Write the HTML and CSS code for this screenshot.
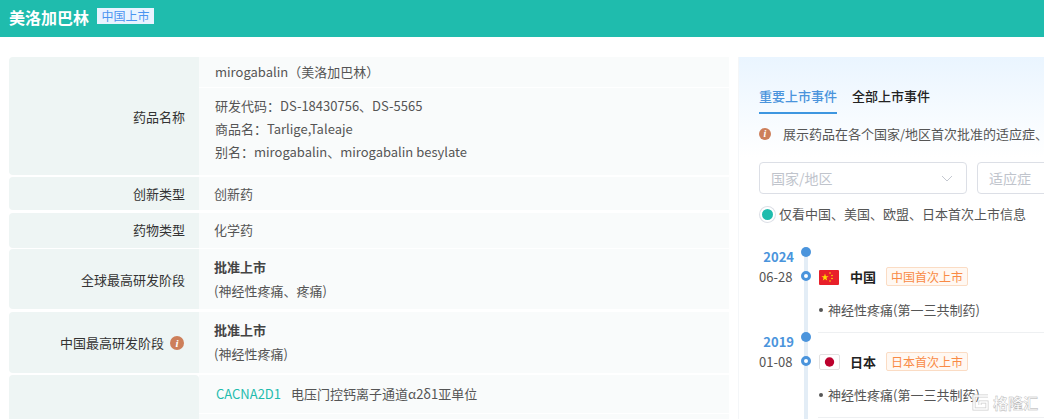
FILE: index.html
```html
<!DOCTYPE html>
<html>
<head>
<meta charset="utf-8">
<title>美洛加巴林</title>
<link rel="stylesheet" href="styles.css">
</head>
<body>
<div class="top">
  <h1>美洛加巴林</h1>
  <span class="top-tag">中国上市</span>
</div>
<div class="main">
  <div class="info">
    <div class="row row-name">
      <div class="label">药品名称</div>
      <div class="val">
        <div class="sub sub-first">mirogabalin（美洛加巴林）</div>
        <div class="sub sub-names">
          <p>研发代码：DS-18430756、DS-5565</p>
          <p>商品名：Tarlige,Taleaje</p>
          <p>别名：mirogabalin、mirogabalin besylate</p>
        </div>
      </div>
    </div>
    <div class="row row-s1">
      <div class="label">创新类型</div>
      <div class="val val-plain">创新药</div>
    </div>
    <div class="row row-s2">
      <div class="label">药物类型</div>
      <div class="val val-plain">化学药</div>
    </div>
    <div class="row row-global">
      <div class="label">全球最高研发阶段</div>
      <div class="val val-plain">
        <strong>批准上市</strong>
        <p>(神经性疼痛、疼痛)</p>
      </div>
    </div>
    <div class="row row-china">
      <div class="label">中国最高研发阶段<i class="tip tip-label">i</i></div>
      <div class="val val-plain">
        <strong>批准上市</strong>
        <p>(神经性疼痛)</p>
      </div>
    </div>
    <div class="row row-target">
      <div class="label"></div>
      <div class="val">
        <div class="sub sub-target"><a>CACNA2D1</a><span>电压门控钙离子通道α2δ1亚单位</span></div>
      </div>
    </div>
  </div>

  <div class="side">
    <div class="tabs">
      <span class="tab on">重要上市事件</span>
      <span class="tab">全部上市事件</span>
    </div>
    <div class="note"><i class="tip">i</i>展示药品在各个国家/地区首次批准的适应症、</div>
    <div class="filters">
      <div class="select sel-country">国家/地区
        <svg width="12" height="7" viewBox="0 0 12 7"><path d="M1 1l5 5 5-5" fill="none" stroke="#c4c8d0" stroke-width="1"/></svg>
      </div>
      <div class="select sel-ind">适应症</div>
    </div>
    <div class="only"><span class="radio"></span>仅看中国、美国、欧盟、日本首次上市信息</div>

    <div class="line">
      <div class="year-row"><span class="year">2024</span><span class="dot"></span></div>
      <div class="event">
        <span class="date">06-28</span><span class="ring"></span>
        <svg class="flag" width="20" height="15" viewBox="0 0 20 15">
          <rect width="20" height="15" rx="1" fill="#e8202a"/>
          <polygon points="6,3.500 6.900,6.200 9.600,6.200 7.400,7.800 8.200,10.500 6,8.900 3.800,10.500 4.600,7.800 2.400,6.200 5.100,6.200" fill="#ffde00"/>
          <circle cx="11" cy="3" r=".8" fill="#ffde00"/><circle cx="13" cy="5.500" r=".8" fill="#ffde00"/>
          <circle cx="13" cy="8.500" r=".8" fill="#ffde00"/><circle cx="11" cy="11" r=".8" fill="#ffde00"/>
        </svg>
        <b class="country">中国</b><span class="first">中国首次上市</span>
      </div>
      <div class="ind">神经性疼痛(第一三共制药)</div>

      <div class="year-row"><span class="year">2019</span><span class="dot"></span></div>
      <div class="event">
        <span class="date">01-08</span><span class="ring"></span>
        <svg class="flag flag-jp" width="21" height="16" viewBox="0 0 21 16">
          <rect x=".5" y=".5" width="20" height="15" rx="1.500" fill="#fff" stroke="#e2e2e2"/>
          <circle cx="10.500" cy="8" r="4.700" fill="#bc002d"/>
        </svg>
        <b class="country">日本</b><span class="first">日本首次上市</span>
      </div>
      <div class="ind">神经性疼痛(第一三共制药)</div>
    </div>
  </div>
</div>
<div class="mark"><svg width="19" height="19" viewBox="0 0 19 19"><path d="M17 3H3v13h13V9H9v3" fill="none" stroke="#c8c8c8" stroke-width="3"/><path d="M17 3H3v13h13V9H9v3" fill="none" stroke="#fff" stroke-width="1.500"/></svg><span>格隆汇</span></div>
</body>
</html>
```

FILE: styles.css
```css
html,body{ margin:0; padding:0; height:419px; overflow:hidden; background:#fff;}
body{ font-family:"Noto Sans CJK SC","Noto Sans",sans-serif; font-size:13px; color:#555; position:relative;}
p,h1{ margin:0; padding:0; font-weight:normal;}
i{ font-style:normal;}

.top{ height:37px; background:#1fbcad; display:flex; align-items:flex-start; padding-left:9px;}
.top h1{ font-size:16px; font-weight:bold; color:#fff; line-height:34px;}
.top-tag{ margin:8px 0 0 8px; width:57px; height:16px; line-height:16px; background:#e9f3ff; color:#4a94f0; font-size:12px; text-align:center;}

.main{ display:flex; padding:20px 0 0 9px; gap:9px;}

.info{ width:720px; flex:none; display:flex; flex-direction:column;}
.row{ display:flex; margin-bottom:2px;}
.label{ width:190px; flex:none; box-sizing:border-box; background:#eef5f4; border-radius:4px 0 0 4px; padding-right:14px; display:flex; align-items:center; justify-content:flex-end; color:#333;}
.val{ flex:1; background:#f9fbfb;}
.val-plain{ padding-left:15px; display:flex; flex-direction:column; justify-content:center;}
.val-plain strong{ color:#444; line-height:24px;}
.val-plain p{ line-height:24px;}

.row-name{ height:118px;}
.row-s1{ height:33px; margin-bottom:3px;}
.row-s2{ height:35px; margin-bottom:1px;}
.row-s2 .label,.row-s2 .val{ padding-bottom:2px;}
.row-global{ height:60px; margin-bottom:3px;}
.row-china{ height:61px;}
.row-china .val{ padding-bottom:2px;}
.row-china .label{ padding-right:15px;}
.row-target{ height:60px;}
.row-target .label{ border-radius:4px 4px 0 0;}

.sub{ padding-left:16px;}
.sub-first{ height:30px; line-height:30px; border-bottom:1px solid #fff;}
.sub-names{ padding-top:6px;}
.sub-names p{ line-height:23px;}
.sub-target{ height:38px; line-height:38px; border-bottom:1px solid #fff; padding-left:17px;}
.sub-target a{ color:#1fbcad; margin-right:10px;}

.tip{ display:inline-block; width:14px; height:14px; line-height:14px; border-radius:50%; background:#cd7f5a; color:#fff; text-align:center; font-size:11px; font-weight:bold; font-family:"Liberation Serif",serif; font-style:italic; flex:none;}
.tip-label{ margin-left:6px;}

.side{ flex:1; min-width:0; height:362px; padding:0 0 0 20px; background:linear-gradient(#eaf5ff 0,#fff 100px); overflow:hidden; white-space:nowrap; border-left:1px solid #f4f6f8;}
.tabs{ display:flex; gap:15px; padding-top:27px; height:30px;}
.tab{ color:#222; font-weight:500; height:30px; line-height:23px; box-sizing:border-box;}
.tab.on{ color:#4a94dc; border-bottom:2px solid #3d96e0;}
.note{ margin-top:10px; line-height:20px; display:flex; align-items:center; height:20px; color:#555;}
.note .tip{ width:12px; height:12px; line-height:12px; margin-right:12px; font-size:10px;}
.filters{ display:flex; gap:10px; margin-top:18px;}
.select{ box-sizing:border-box; height:32px; line-height:30px; border:1px solid #dcdfe6; border-radius:4px; background:#fff; color:#c0c4cc; font-size:14px; padding-left:11px; flex:none; display:flex; justify-content:space-between; align-items:center;}
.sel-country{ width:208px; padding-right:13px;}
.sel-ind{ width:200px;}
.only{ margin-top:9px; height:22px; line-height:22px; display:flex; align-items:center; color:#555;}
.radio{ width:11px; height:11px; margin-right:4px; border-radius:50%; background:#1fbcad; border:2px solid #fff; box-shadow:0 0 0 1px #dcdfe6; margin-left:1px;}

.line{ margin-top:22px; position:relative;}
.line:before{ content:""; position:absolute; left:45px; top:6px; bottom:-200px; width:4px; background:#e3edf6;}
.year-row,.event{ position:relative; display:flex; align-items:center;}
.year-row{ height:19px;}
.year{ width:35px; text-align:right; color:#4a94dc; font-weight:bold; line-height:20px;}
.dot{ position:absolute; left:42px; top:0; width:10px; height:10px; border-radius:50%; background:#4a94dc;}
.event{ height:20px;}
.date{ width:33px; text-align:right; color:#555;}
.ring{ position:absolute; left:42px; top:5px; width:4px; height:4px; border:3px solid #4a94dc; border-radius:50%; background:#fff;}
.flag{ margin:2px 0 0 27px; flex:none;}
.country{ margin-left:11px; color:#222;}
.flag-jp + .country{ margin-left:10px;}
.first{ margin-left:10px; height:17px; line-height:17px; padding:0 4px; border:1px solid #fbdcc4; border-radius:2px; background:#fff8f2; color:#f98a45; font-size:12px;}
.ind{ margin:13px 0 -1px 59px; padding:0 0 12px 10px; height:21px; line-height:21px; position:relative; border-bottom:1px solid #eef0f2; color:#555;}
.ind:before{ content:""; position:absolute; left:1px; top:9px; width:4px; height:4px; border-radius:50%; background:#555;}

.mark{ position:absolute; right:6px; bottom:6px; display:flex; align-items:center; gap:3px; color:#fff; font-size:15px; font-weight:bold; -webkit-text-stroke:.4px #aaa; opacity:.9;}
```
